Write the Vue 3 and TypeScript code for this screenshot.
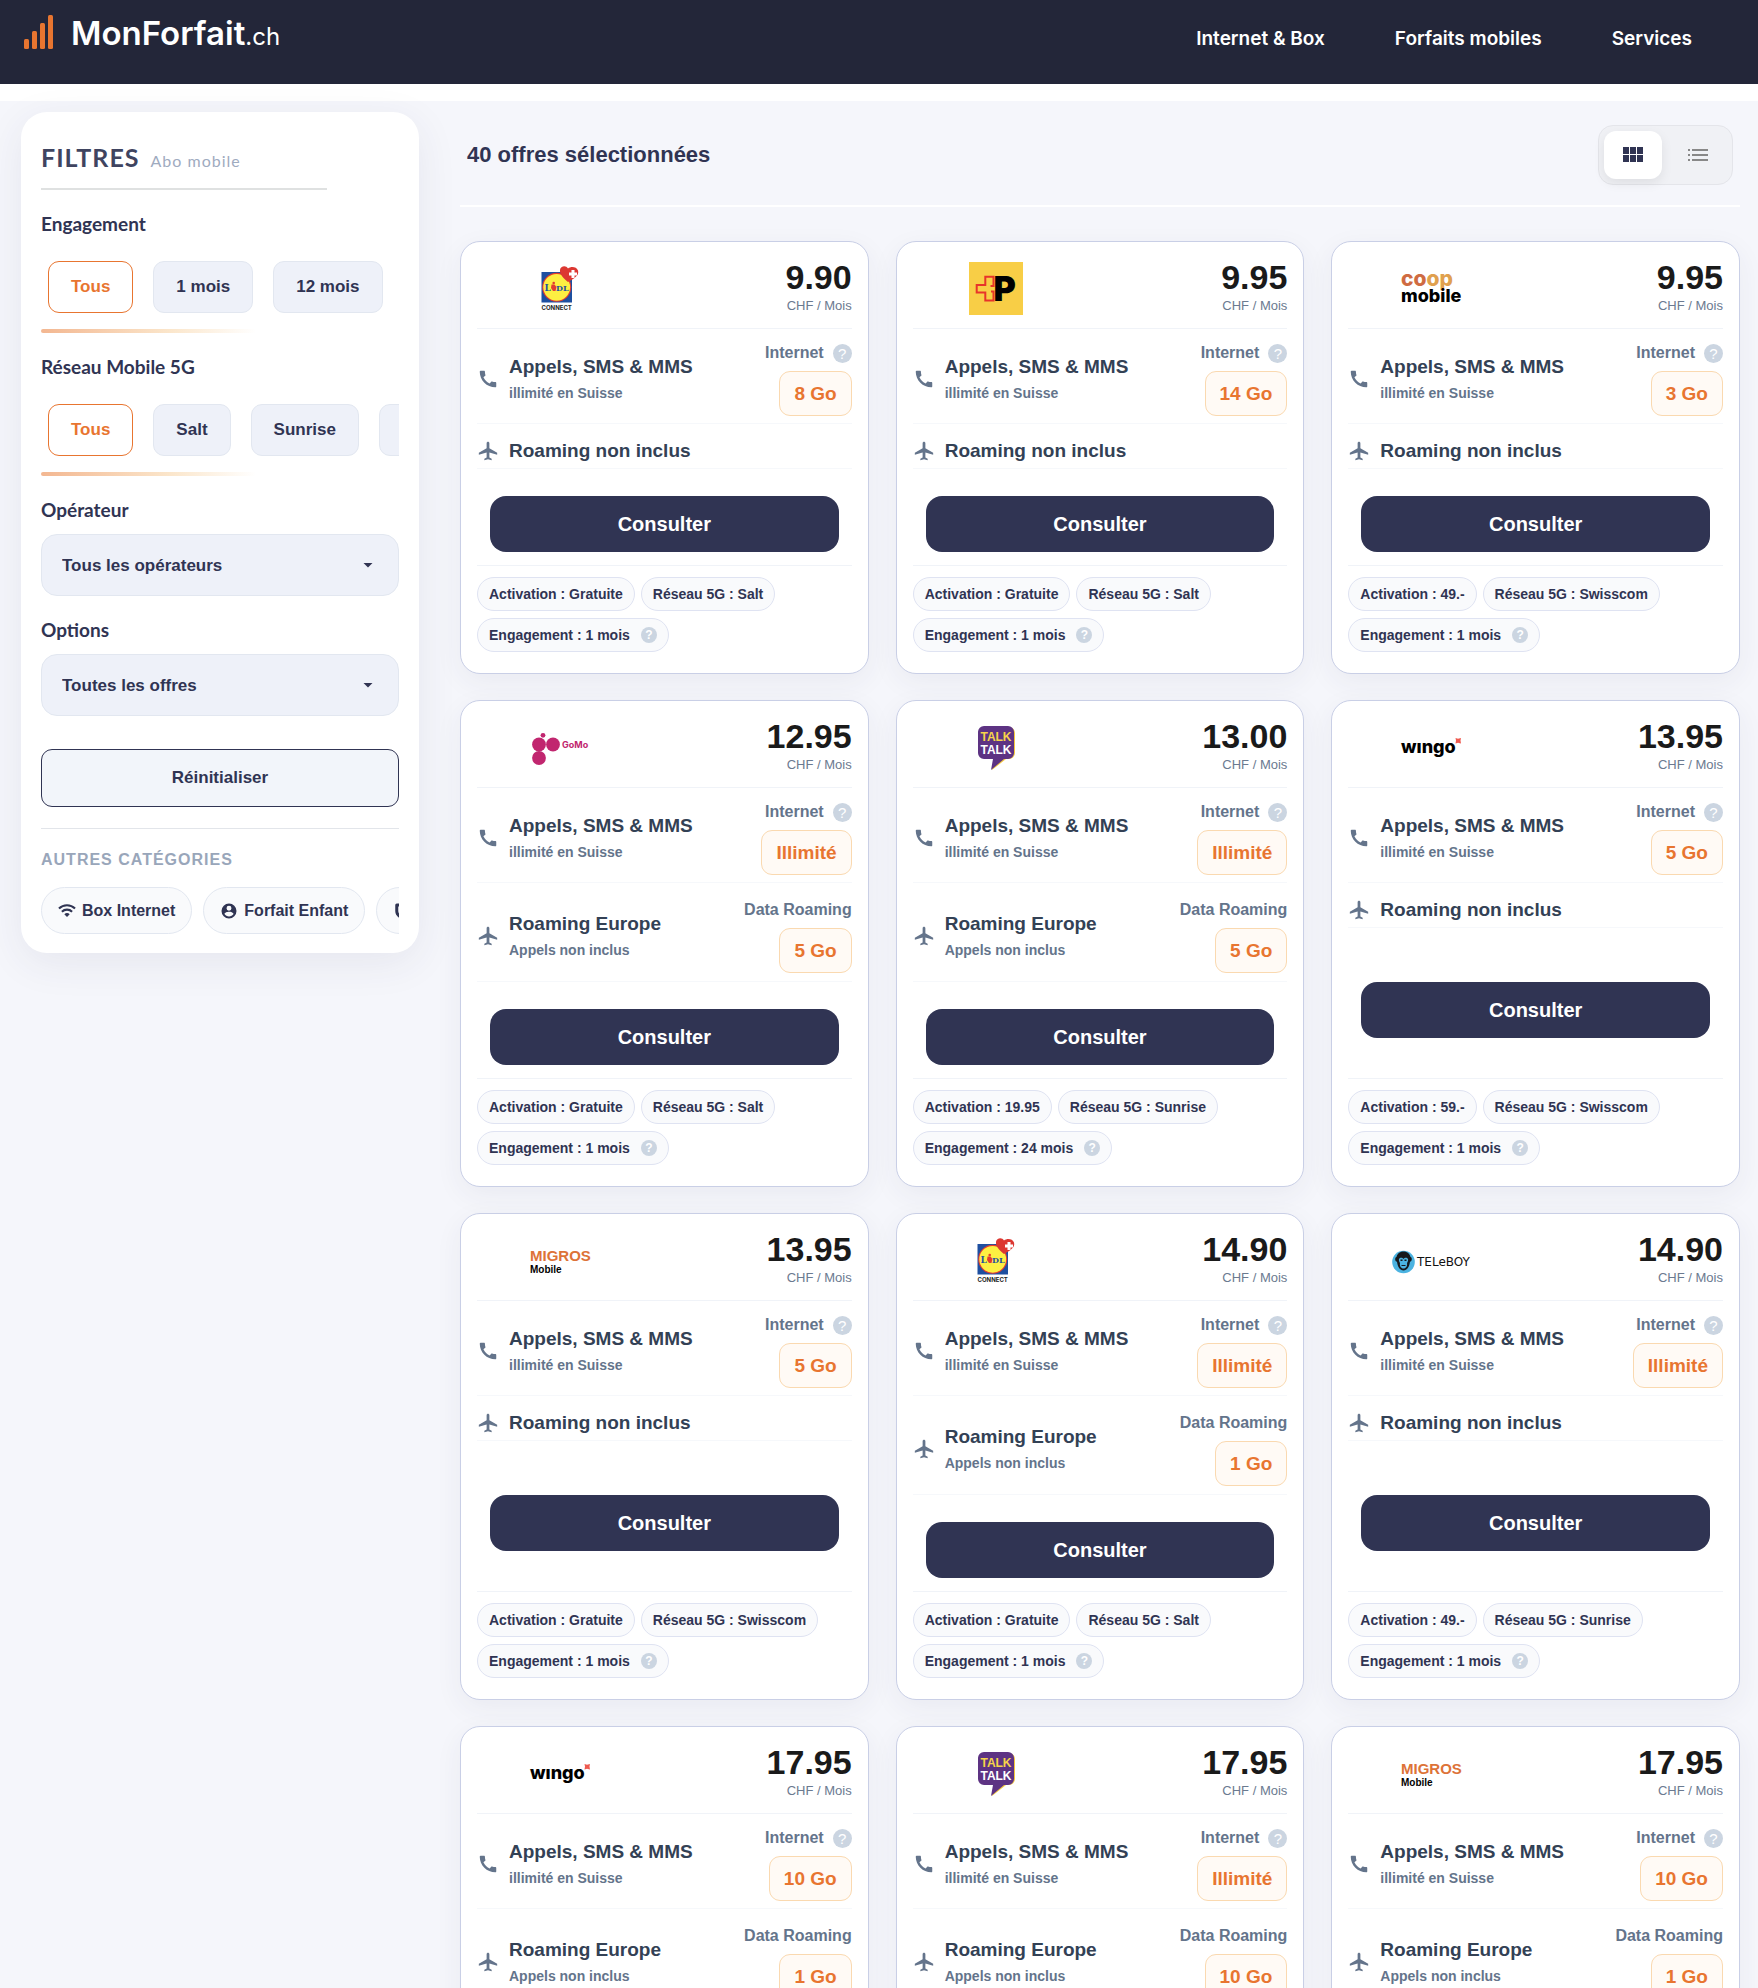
<script setup lang="ts">
import { ref } from 'vue'

type Brand = 'lidl' | 'post' | 'coop' | 'gomo' | 'talktalk' | 'wingo' | 'migros' | 'teleboy'

interface Offer {
  brand: Brand
  name: string
  price: string
  data: string
  roaming: string | null
  activation: string
  network: string
  term: string
}

const offers: Offer[] = [
  { brand: 'lidl', name: 'Lidl Connect', price: '9.90', data: '8 Go', roaming: null, activation: 'Gratuite', network: 'Salt', term: '1 mois' },
  { brand: 'post', name: 'Post Mobile', price: '9.95', data: '14 Go', roaming: null, activation: 'Gratuite', network: 'Salt', term: '1 mois' },
  { brand: 'coop', name: 'Coop Mobile', price: '9.95', data: '3 Go', roaming: null, activation: '49.-', network: 'Swisscom', term: '1 mois' },
  { brand: 'gomo', name: 'GoMo', price: '12.95', data: 'Illimité', roaming: '5 Go', activation: 'Gratuite', network: 'Salt', term: '1 mois' },
  { brand: 'talktalk', name: 'TalkTalk', price: '13.00', data: 'Illimité', roaming: '5 Go', activation: '19.95', network: 'Sunrise', term: '24 mois' },
  { brand: 'wingo', name: 'Wingo', price: '13.95', data: '5 Go', roaming: null, activation: '59.-', network: 'Swisscom', term: '1 mois' },
  { brand: 'migros', name: 'Migros Mobile', price: '13.95', data: '5 Go', roaming: null, activation: 'Gratuite', network: 'Swisscom', term: '1 mois' },
  { brand: 'lidl', name: 'Lidl Connect', price: '14.90', data: 'Illimité', roaming: '1 Go', activation: 'Gratuite', network: 'Salt', term: '1 mois' },
  { brand: 'teleboy', name: 'Teleboy', price: '14.90', data: 'Illimité', roaming: null, activation: '49.-', network: 'Sunrise', term: '1 mois' },
  { brand: 'wingo', name: 'Wingo', price: '17.95', data: '10 Go', roaming: '1 Go', activation: '59.-', network: 'Swisscom', term: '1 mois' },
  { brand: 'talktalk', name: 'TalkTalk', price: '17.95', data: 'Illimité', roaming: '10 Go', activation: '19.95', network: 'Sunrise', term: '24 mois' },
  { brand: 'migros', name: 'Migros Mobile', price: '17.95', data: '10 Go', roaming: '1 Go', activation: 'Gratuite', network: 'Swisscom', term: '1 mois' },
]

const terms = ['Tous', '1 mois', '12 mois']
const networks = ['Tous', 'Salt', 'Sunrise', 'Swisscom']
const term = ref('Tous')
const network = ref('Tous')
const operator = ref('Tous les opérateurs')
const option = ref('Toutes les offres')
const view = ref<'grid' | 'list'>('grid')

function reset() {
  term.value = 'Tous'
  network.value = 'Tous'
  operator.value = 'Tous les opérateurs'
  option.value = 'Toutes les offres'
}
</script>

<template>
  <div class="page">
    <header class="topbar">
      <a class="brand" href="#">
        <svg class="brand-mark" width="30" height="34" viewBox="0 0 30 34" aria-hidden="true">
          <rect x="0" y="24" width="5" height="10" rx="1.5" />
          <rect x="8" y="16" width="5" height="18" rx="1.5" />
          <rect x="16" y="8" width="5" height="26" rx="1.5" />
          <rect x="24" y="0" width="5" height="34" rx="1.5" />
        </svg>
        <span class="brand-name">MonForfait<span class="brand-tld">.ch</span></span>
      </a>
      <nav class="nav">
        <a href="#">Internet &amp; Box</a>
        <a href="#">Forfaits mobiles</a>
        <a href="#">Services</a>
      </nav>
    </header>

    <div class="content">
      <aside class="filters">
        <h2 class="filters-title">FILTRES <small>Abo mobile</small></h2>

        <h3 class="label">Engagement</h3>
        <div class="chips">
          <button v-for="t in terms" :key="t" type="button" class="chip" :class="{ on: term === t }" @click="term = t">{{ t }}</button>
        </div>
        <div class="fade-bar"></div>

        <h3 class="label">Réseau Mobile 5G</h3>
        <div class="chips">
          <button v-for="n in networks" :key="n" type="button" class="chip" :class="{ on: network === n }" @click="network = n">{{ n }}</button>
        </div>
        <div class="fade-bar"></div>

        <label class="label" for="operator">Opérateur</label>
        <div class="select">
          <select id="operator" v-model="operator">
            <option>Tous les opérateurs</option>
          </select>
          <svg width="24" height="24" viewBox="0 0 24 24" aria-hidden="true"><path d="M7.500 10l4.500 4.500 4.500-4.500z" /></svg>
        </div>

        <label class="label" for="option">Options</label>
        <div class="select">
          <select id="option" v-model="option">
            <option>Toutes les offres</option>
          </select>
          <svg width="24" height="24" viewBox="0 0 24 24" aria-hidden="true"><path d="M7.500 10l4.500 4.500 4.500-4.500z" /></svg>
        </div>

        <button type="button" class="reset" @click="reset">Réinitialiser</button>

        <h3 class="other-title">AUTRES CATÉGORIES</h3>
        <div class="links">
          <a class="pill" href="#">
            <svg width="18" height="18" viewBox="0 0 24 24" aria-hidden="true">
              <path d="M1.300 8.700a15.200 15.200 0 0 1 21.400 0M5.200 12.900a9.700 9.700 0 0 1 13.600 0" fill="none" stroke="currentColor" stroke-width="2.800" />
              <path d="M8.400 16.300a5.100 5.100 0 0 1 7.200 0L12 20z" />
            </svg>
            Box Internet
          </a>
          <a class="pill" href="#">
            <svg width="18" height="18" viewBox="0 0 24 24" aria-hidden="true">
              <path fill-rule="evenodd" d="M12 2a10 10 0 1 0 0 20 10 10 0 0 0 0-20zM12 5a3.300 3.300 0 1 1 0 6.600A3.300 3.300 0 0 1 12 5zM12 19.200c-2.500 0-4.700-1.300-6-3.200 0-2 4-3.100 6-3.100s6 1.100 6 3.100c-1.300 1.900-3.500 3.200-6 3.200z" />
            </svg>
            Forfait Enfant
          </a>
          <a class="pill" href="#">
            <svg width="18" height="18" viewBox="0 0 24 24" aria-hidden="true">
              <path d="M5 4h14v8c0 4-3 7-7 9-4-2-7-5-7-9z" fill="none" stroke="currentColor" stroke-width="4" stroke-linejoin="round" />
            </svg>
            Assurances
          </a>
        </div>
      </aside>

      <main class="results">
        <div class="results-head">
          <h1>40 offres sélectionnées</h1>
          <div class="toggle">
            <button type="button" :class="{ active: view === 'grid' }" aria-label="Grille" @click="view = 'grid'">
              <svg width="24" height="24" viewBox="0 0 24 24" aria-hidden="true">
                <path d="M2 4h6v7H2zM9 4h6v7H9zM16 4h6v7h-6zM2 12h6v7H2zM9 12h6v7H9zM16 12h6v7h-6z" />
              </svg>
            </button>
            <button type="button" :class="{ active: view === 'list' }" aria-label="Liste" @click="view = 'list'">
              <svg width="24" height="24" viewBox="0 0 24 24" aria-hidden="true">
                <path d="M2 6h2v2H2zM2 11h2v2H2zM2 16h2v2H2zM6 6h16v2H6zM6 11h16v2H6zM6 16h16v2H6z" />
              </svg>
            </button>
          </div>
        </div>

        <div class="grid">
          <article v-for="(o, i) in offers" :key="i" class="card">
            <div class="card-head">
              <svg class="logo" viewBox="0 0 100 54" width="100" height="54" role="img" :aria-label="o.name">
                <g v-if="o.brand === 'lidl'">
                  <rect x="31.500" y="11" width="30.500" height="30.500" fill="#1e4fa0" />
                  <circle cx="46.700" cy="26.300" r="14.500" fill="#e23b30" />
                  <circle cx="46.700" cy="26.300" r="13.400" fill="#fdef42" />
                  <text x="34.500" y="30" font-family="DejaVu Serif, serif" font-weight="700" font-size="9" fill="#1e4fa0">L</text>
                  <path d="M41.500 23.500h3l2 2.500-1 4h-2.500l-2-3z" fill="#e23b30" />
                  <circle cx="43.700" cy="22" r="1.300" fill="#e23b30" />
                  <text x="46" y="30" font-family="DejaVu Serif, serif" font-weight="700" font-size="8" fill="#1e4fa0">DL</text>
                  <path d="M58 21C53 17 49.500 13 50 9c.5-4 6-5 8-1.500 3-2.500 8.500-2 10 2 1.500 5-4 8-10 11.500z" fill="#dc3832" />
                  <path d="M61.500 9h3v2.500H67v3h-2.500V17h-3v-2.500H59v-3h2.500z" fill="#fff" />
                  <text x="46.700" y="49" text-anchor="middle" font-family="Inter, sans-serif" font-weight="700" font-size="6" fill="#222">CONNECT</text>
                </g>
                <g v-else-if="o.brand === 'post'">
                  <rect x="23" y="1" width="54" height="53" fill="#f8ce46" />
                  <path d="M47.500 20v-4.200h-8.200v8.200h-8.600v7.500h8.600v8h8.200v-9h-2.500M47.500 20v5h-3" fill="none" stroke="#e8342a" stroke-width="2" />
                  <text x="47.500" y="40" font-family="Inter, sans-serif" font-weight="900" font-size="34" fill="#000">P</text>
                </g>
                <g v-else-if="o.brand === 'coop'" font-family="Inter, sans-serif" font-weight="800">
                  <text x="20" y="25" font-size="21" fill="#cf6b42">co<tspan fill="#e0a04e">op</tspan></text>
                  <text x="20" y="41" font-size="18" fill="#000">mobile</text>
                </g>
                <g v-else-if="o.brand === 'gomo'" fill="#c1266f">
                  <circle cx="29" cy="24.500" r="6.900" />
                  <circle cx="43" cy="24.500" r="6.900" />
                  <circle cx="29" cy="38" r="6.900" />
                  <circle cx="33" cy="15.300" r="2.400" />
                  <text x="52" y="27.500" font-family="Inter, sans-serif" font-weight="700" font-size="9">GoMo</text>
                </g>
                <g v-else-if="o.brand === 'talktalk'">
                  <path d="M39 7h24a6 6 0 0 1 6 6v20a6 6 0 0 1-6 6h-3L46 50l2-11h-9z" fill="#f3c83c" />
                  <path d="M38 6h24a6 6 0 0 1 6 6v21a6 6 0 0 1-6 6h-4L45 50l2-11h-9a6 6 0 0 1-6-6V12a6 6 0 0 1 6-6z" fill="#5d3383" />
                  <g font-family="'Liberation Sans Narrow', 'Liberation Sans', sans-serif" font-weight="700" font-size="12" text-anchor="middle">
                    <text x="50" y="21" fill="#f6d44a">TALK</text>
                    <text x="50" y="34" fill="#fff">TALK</text>
                  </g>
                </g>
                <g v-else-if="o.brand === 'wingo'">
                  <text x="20" y="33" font-family="Inter, sans-serif" font-weight="800" font-size="18" fill="#000">wıngo</text>
                  <path d="M74.500 18l2.500.7 3-.7-.5 2.500.5 3-3-.7-2.500.7.5-3z" fill="#ee5a50" />
                </g>
                <g v-else-if="o.brand === 'migros'" font-family="'Liberation Sans', sans-serif" font-weight="700">
                  <text x="20" y="28" font-size="15" fill="#dd7338">MIGROS</text>
                  <text x="20" y="40" font-size="10" fill="#000">Mobile</text>
                </g>
                <g v-else>
                  <circle cx="22.500" cy="29" r="11.300" fill="#4bb3e1" />
                  <path d="M15.500 24c1-4 4-5.500 7-5.500s6 1.500 7 5.500c1.800.3 1.800 4.500-.5 4.800-.6 5.200-3 8.700-6.500 8.700s-5.900-3.500-6.500-8.700c-2.300-.3-2.300-4.500-.5-4.800z" fill="#16191d" />
                  <path d="M18 26c1-1.800 3.500-1.500 4.500 0 1-1.500 3.500-1.800 4.500 0 .5 1.500-.5 3-1 4 .6 3-1 5.500-3.500 5.500S18.400 33 19 30c-.5-1-1.500-2.500-1-4z" fill="#4bb3e1" />
                  <path d="M19.500 26.500h2v1.500h-2zM23.500 26.500h2v1.500h-2zM20.500 32h4v1h-4z" fill="#16191d" />
                  <text x="36" y="33" font-family="'DejaVu Sans', sans-serif" font-size="12" fill="#111">TELeBOY</text>
                </g>
              </svg>
              <div class="price">
                <strong>{{ o.price }}</strong>
                <span>CHF / Mois</span>
              </div>
            </div>

            <div class="row">
              <svg class="row-icon" width="22" height="22" viewBox="0 0 24 24" aria-hidden="true">
                <path d="M20.010 15.380c-1.230 0-2.420-.2-3.530-.56-.35-.12-.74-.03-1.010.24l-1.570 1.970c-2.830-1.350-5.480-3.900-6.890-6.830l1.950-1.660c.27-.28.35-.67.24-1.020-.37-1.110-.56-2.300-.56-3.530 0-.54-.45-.99-.99-.99H4.190C3.650 3 3 3.240 3 3.990 3 13.280 10.730 21 20.010 21c.71 0 .99-.63.99-1.180v-3.450c0-.54-.45-.99-.99-.99z" />
              </svg>
              <div class="row-text">
                <b>Appels, SMS &amp; MMS</b>
                <span>illimité en Suisse</span>
              </div>
              <div class="row-value">
                <span class="value-label">Internet <button type="button" class="help" aria-label="Aide Internet">?</button></span>
                <span class="badge">{{ o.data }}</span>
              </div>
            </div>

            <div class="row roaming" :class="{ simple: !o.roaming }">
              <svg class="row-icon" width="22" height="22" viewBox="0 0 24 24" aria-hidden="true">
                <path d="M22 16v-2l-8.500-5V3.500c0-.83-.67-1.500-1.500-1.500s-1.500.67-1.500 1.500V9L2 14v2l8.500-2.500V19L8 20.500V22l4-1 4 1v-1.500L13.500 19v-5.500L22 16z" />
              </svg>
              <div v-if="o.roaming" class="row-text">
                <b>Roaming Europe</b>
                <span>Appels non inclus</span>
              </div>
              <div v-else class="row-text"><b>Roaming non inclus</b></div>
              <div v-if="o.roaming" class="row-value">
                <span class="value-label">Data Roaming</span>
                <span class="badge">{{ o.roaming }}</span>
              </div>
            </div>

            <div class="action">
              <button type="button" class="cta">Consulter</button>
            </div>

            <div class="tags">
              <span class="tag">Activation : {{ o.activation }}</span>
              <span class="tag">Réseau 5G : {{ o.network }}</span>
              <span class="tag">Engagement : {{ o.term }} <button type="button" class="help small" aria-label="Aide engagement">?</button></span>
            </div>
          </article>
        </div>
      </main>
    </div>
  </div>
</template>

<style>
body {
  background: #f5f6fb;
}
</style>

<style scoped>
.page,
.page * {
  box-sizing: border-box;
}

.page {
  font-family: "Liberation Sans", Arial, sans-serif;
  color: #303453;
}

h1,
h2,
h3 {
  margin: 0;
}

button,
select {
  font-family: inherit;
  cursor: pointer;
}

svg {
  flex: none;
  fill: currentColor;
}

a {
  color: inherit;
  text-decoration: none;
}

.topbar {
  display: flex;
  justify-content: space-between;
  height: 101px;
  padding: 0 66px 0 24px;
  background: #232639;
  border-bottom: 17px solid #fff;
  font-family: Inter, sans-serif;
  color: #fff;
}

.brand {
  display: flex;
  align-items: flex-start;
  gap: 17px;
  padding-top: 15px;
}

.brand-mark {
  color: #e87530;
}

.brand-name {
  font-size: 33px;
  font-weight: 600;
  line-height: 36px;
}

.brand-tld {
  font-size: 24px;
  font-weight: 400;
}

.nav {
  display: flex;
  gap: 70px;
  padding-top: 27px;
  font-size: 19px;
  font-weight: 600;
  line-height: 24px;
}

.content {
  display: grid;
  grid-template-columns: 398px minmax(0, 1fr);
  align-items: start;
  gap: 41px;
  padding: 11px 18px 26px 21px;
}

/* Filters */
.filters {
  padding: 29px 20px 19px;
  background: #fff;
  border-radius: 26px;
  box-shadow: 0 10px 40px rgba(48, 52, 83, 0.08);
}

.filters-title {
  width: 80%;
  padding-bottom: 15px;
  border-bottom: 2px solid #dfe1e1;
  font-family: Lato, sans-serif;
  font-size: 25px;
  font-weight: 700;
  line-height: 32px;
  letter-spacing: 1px;
  color: #3f4460;
}

.filters-title small {
  margin-left: 4px;
  font-size: 16px;
  font-weight: 400;
  line-height: 16px;
  letter-spacing: 1px;
  color: #9fabbf;
}

.label {
  display: block;
  margin-top: 22px;
  font-family: Lato, sans-serif;
  font-size: 19px;
  font-weight: 700;
  line-height: 24px;
}

.chips {
  display: flex;
  gap: 20px;
  padding: 25px 7px 16px;
  overflow: hidden;
}

.chip {
  flex: none;
  height: 52px;
  padding: 0 22px;
  background: #eef1f9;
  border: 1px solid #e2e7f0;
  border-radius: 11px;
  font-size: 17px;
  font-weight: 700;
  color: #303453;
}

.chip.on {
  background: #fff;
  border-color: #e87530;
  color: #e87530;
}

.fade-bar {
  width: 60%;
  height: 4px;
  background: linear-gradient(90deg, #f3b791, #fbe6cb 60%, #fff);
  border-radius: 2px;
}

.select {
  display: grid;
  align-items: center;
  margin-top: 12px;
}

.select select,
.select svg {
  grid-area: 1 / 1;
}

.select svg {
  justify-self: end;
  margin-right: 19px;
  pointer-events: none;
}

.select select {
  width: 100%;
  height: 62px;
  padding: 0 20px;
  appearance: none;
  background: #eef1f9;
  border: 1px solid #e2e7f0;
  border-radius: 16px;
  font-size: 17px;
  font-weight: 700;
  color: #303453;
}

.reset {
  width: 100%;
  height: 58px;
  margin-top: 33px;
  background: #f2f5fa;
  border: 1px solid #303453;
  border-radius: 11px;
  font-size: 17px;
  font-weight: 700;
  color: #303453;
}

.other-title {
  margin-top: 21px;
  padding-top: 21px;
  border-top: 1px solid #e2e5ea;
  font-size: 16px;
  font-weight: 700;
  line-height: 20px;
  letter-spacing: 1px;
  color: #99a6ba;
}

.links {
  display: flex;
  gap: 11px;
  margin-top: 17px;
  overflow: hidden;
}

.pill {
  flex: none;
  display: flex;
  align-items: center;
  gap: 6px;
  height: 47px;
  padding: 0 16px;
  background: #f9fafc;
  border: 1px solid #e2e7f0;
  border-radius: 24px;
  font-size: 16px;
  font-weight: 700;
}

/* Results */
.results-head {
  display: flex;
  align-items: center;
  justify-content: space-between;
  padding: 13px 7px 20px;
  border-bottom: 2px solid #fff;
}

.results-head h1 {
  font-size: 22px;
  font-weight: 700;
  line-height: 28px;
}

.toggle {
  display: flex;
  gap: 7px;
  padding: 5px;
  background: #f0f1f5;
  border: 1px solid #e4e5ea;
  border-radius: 15px;
}

.toggle button {
  display: flex;
  align-items: center;
  justify-content: center;
  width: 58px;
  height: 48px;
  padding: 0;
  background: none;
  border: 0;
  border-radius: 12px;
  color: #888;
}

.toggle button.active {
  background: #fff;
  box-shadow: 0 4px 12px rgba(0, 0, 0, 0.08);
  color: #303453;
}

.grid {
  display: grid;
  grid-template-columns: repeat(3, minmax(0, 1fr));
  gap: 26px 27px;
  padding-top: 34px;
}

.card {
  display: flex;
  flex-direction: column;
  padding: 0 16px 21px;
  background: #fff;
  border: 1px solid #c9cfe6;
  border-radius: 20px;
  box-shadow: 0 8px 28px rgba(48, 52, 83, 0.06);
}

.card-head {
  display: flex;
  align-items: flex-end;
  justify-content: space-between;
  padding: 15px 0 13px;
  border-bottom: 1px solid #f0f3f8;
}

.logo {
  margin-left: 33px;
}

.price {
  display: flex;
  flex-direction: column;
  align-items: flex-end;
}

.price strong {
  font-size: 34px;
  line-height: 40px;
  color: #1a1a1a;
}

.price span {
  font-size: 13px;
  line-height: 18px;
  color: #6b7a90;
}

.row {
  display: flex;
  align-items: center;
  gap: 10px;
  padding: 12px 0 7px;
  border-bottom: 1px solid #f6f8fb;
}

.row.roaming {
  padding: 15px 0 8px;
}

.row.simple {
  padding: 13px 0 3px;
}

.row-icon {
  color: #64748b;
}

.row-text {
  flex: 1;
  display: flex;
  flex-direction: column;
}

.row-text b {
  font-size: 19px;
  line-height: 28px;
  color: #334155;
}

.row-text span {
  font-size: 14px;
  font-weight: 700;
  line-height: 24px;
  color: #64748b;
}

.row-value {
  display: flex;
  flex-direction: column;
  align-items: flex-end;
  gap: 6px;
}

.value-label {
  display: flex;
  align-items: center;
  gap: 9px;
  font-size: 16px;
  font-weight: 700;
  line-height: 24px;
  color: #64748b;
}

.badge {
  padding: 0 14px;
  background: #fffaf5;
  border: 1px solid #fad9b0;
  border-radius: 11px;
  font-size: 19px;
  font-weight: 700;
  line-height: 43px;
  color: #e87530;
}

.help {
  display: flex;
  align-items: center;
  justify-content: center;
  width: 19px;
  height: 19px;
  padding: 0;
  background: #cbd5e1;
  border: 0;
  border-radius: 50%;
  font-size: 15px;
  line-height: 19px;
  color: #fff;
}

.help.small {
  width: 16px;
  height: 16px;
  font-size: 12px;
  font-weight: 700;
  line-height: 16px;
}

.action {
  flex: 1;
  display: flex;
  align-items: center;
  padding: 27px 13px 13px;
}

.cta {
  width: 100%;
  height: 56px;
  background: #303453;
  border: 0;
  border-radius: 16px;
  font-size: 20px;
  font-weight: 700;
  color: #fff;
}

.tags {
  display: flex;
  flex-wrap: wrap;
  gap: 7px 6px;
  padding-top: 11px;
  border-top: 1px solid #f0f3f8;
}

.tag {
  display: flex;
  align-items: center;
  gap: 11px;
  height: 34px;
  padding: 0 11px;
  background: #f9fafc;
  border: 1px solid #dfe3f2;
  border-radius: 17px;
  font-size: 14px;
  font-weight: 700;
  color: #303453;
}
</style>
